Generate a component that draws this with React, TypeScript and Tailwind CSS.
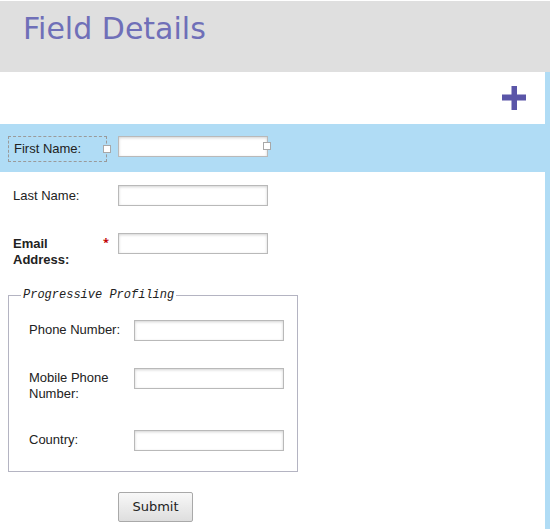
import React from 'react';

const LABEL = "font-['Liberation_Sans',Arial,sans-serif] text-[13px] leading-[16px] text-[#222]";
const INPUT =
  'h-[21px] w-[150px] shrink-0 border border-[#b9b9b9] bg-white shadow-[inset_0_1px_3px_rgba(0,0,0,0.18)]';

function Handle({ className }: { className: string }) {
  return <span className={`absolute h-[8px] w-[8px] border border-[#a8a8a8] bg-white ${className}`} />;
}

export default function App() {
  return (
    <div className="h-[529px] w-[550px] overflow-hidden bg-white pt-[1px]">
      {/* ── Title bar ─────────────────────────────────────────────── */}
      <header className="flex h-[71px] items-start bg-[#dfdfdf] pl-[23px] pt-[10px]">
        <h1 className="font-['DejaVu_Sans',Verdana,sans-serif] text-[30px] leading-[36px] text-[#6f6fb8]">
          Field Details
        </h1>
      </header>

      <div className="border-r-[5px] border-[#b0dcf5]">
        {/* ── Toolbar ───────────────────────────────────────────────── */}
        <div className="flex h-[52px] items-center justify-end pr-[19px]">
          <svg width="24" height="24" viewBox="0 0 24 24" aria-label="Add field">
            <rect x="9.5" y="0" width="5.5" height="24" fill="#5a55a8" />
            <rect x="0" y="8.5" width="24" height="6" fill="#5a55a8" />
          </svg>
        </div>

        {/* ── Selected row ──────────────────────────────────────────── */}
        <div className="flex h-[48px] items-start bg-[#b0dcf5] pl-[8px] pt-[12px]">
          <div className="relative flex h-[26px] w-[99px] items-center border border-dashed border-[#9a9a9a] pl-[5px]">
            <span className={LABEL}>First Name:</span>
            <Handle className="right-[-5px] top-[8px]" />
          </div>
          <div className="relative ml-[11px]">
            <div className={INPUT} />
            <Handle className="right-[-3px] top-[6px]" />
          </div>
        </div>

        {/* ── Plain rows ────────────────────────────────────────────── */}
        <div className="flex items-start pl-[13px] pt-[13px]">
          <span className={`${LABEL} w-[105px] pt-[3px]`}>Last Name:</span>
          <div className={INPUT} />
        </div>

        <div className="flex items-start pl-[13px] pt-[27px]">
          <span className={`${LABEL} w-[90px] pt-[3px] font-bold`}>Email Address:</span>
          <span className="w-[15px] pt-[1px] text-[11px] leading-[16px] font-bold text-[#c00000]">*</span>
          <div className={INPUT} />
        </div>

        {/* ── Progressive profiling group ───────────────────────────── */}
        <fieldset className="ml-[8px] mt-[20px] w-[290px] border border-[#b4b4c2] pb-[20px]">
          <legend className="ml-[12px] px-[2px] font-['Liberation_Mono','Courier_New',monospace] text-[12px] italic leading-[14px] text-[#222]">
            Progressive Profiling
          </legend>
          <div className="flex items-start pl-[20px] pt-[18px]">
            <span className={`${LABEL} w-[105px] pt-[2px]`}>Phone Number:</span>
            <div className={INPUT} />
          </div>
          <div className="flex items-start pl-[20px] pt-[27px]">
            <span className={`${LABEL} w-[105px] pt-[2px] pr-[8px]`}>Mobile Phone Number:</span>
            <div className={INPUT} />
          </div>
          <div className="flex items-start pl-[20px] pt-[28px]">
            <span className={`${LABEL} w-[105px] pt-[2px]`}>Country:</span>
            <div className={INPUT} />
          </div>
        </fieldset>

        {/* ── Submit ────────────────────────────────────────────────── */}
        <div className="h-[58px] pl-[118px] pt-[20px]">
          <button className="h-[30px] w-[75px] rounded-[2px] border border-[#a9a9a9] bg-gradient-to-b from-[#f8f8f8] to-[#dedede] font-['DejaVu_Sans',Verdana,sans-serif] text-[13px] text-[#222]">
            Submit
          </button>
        </div>
      </div>
    </div>
  );
}
